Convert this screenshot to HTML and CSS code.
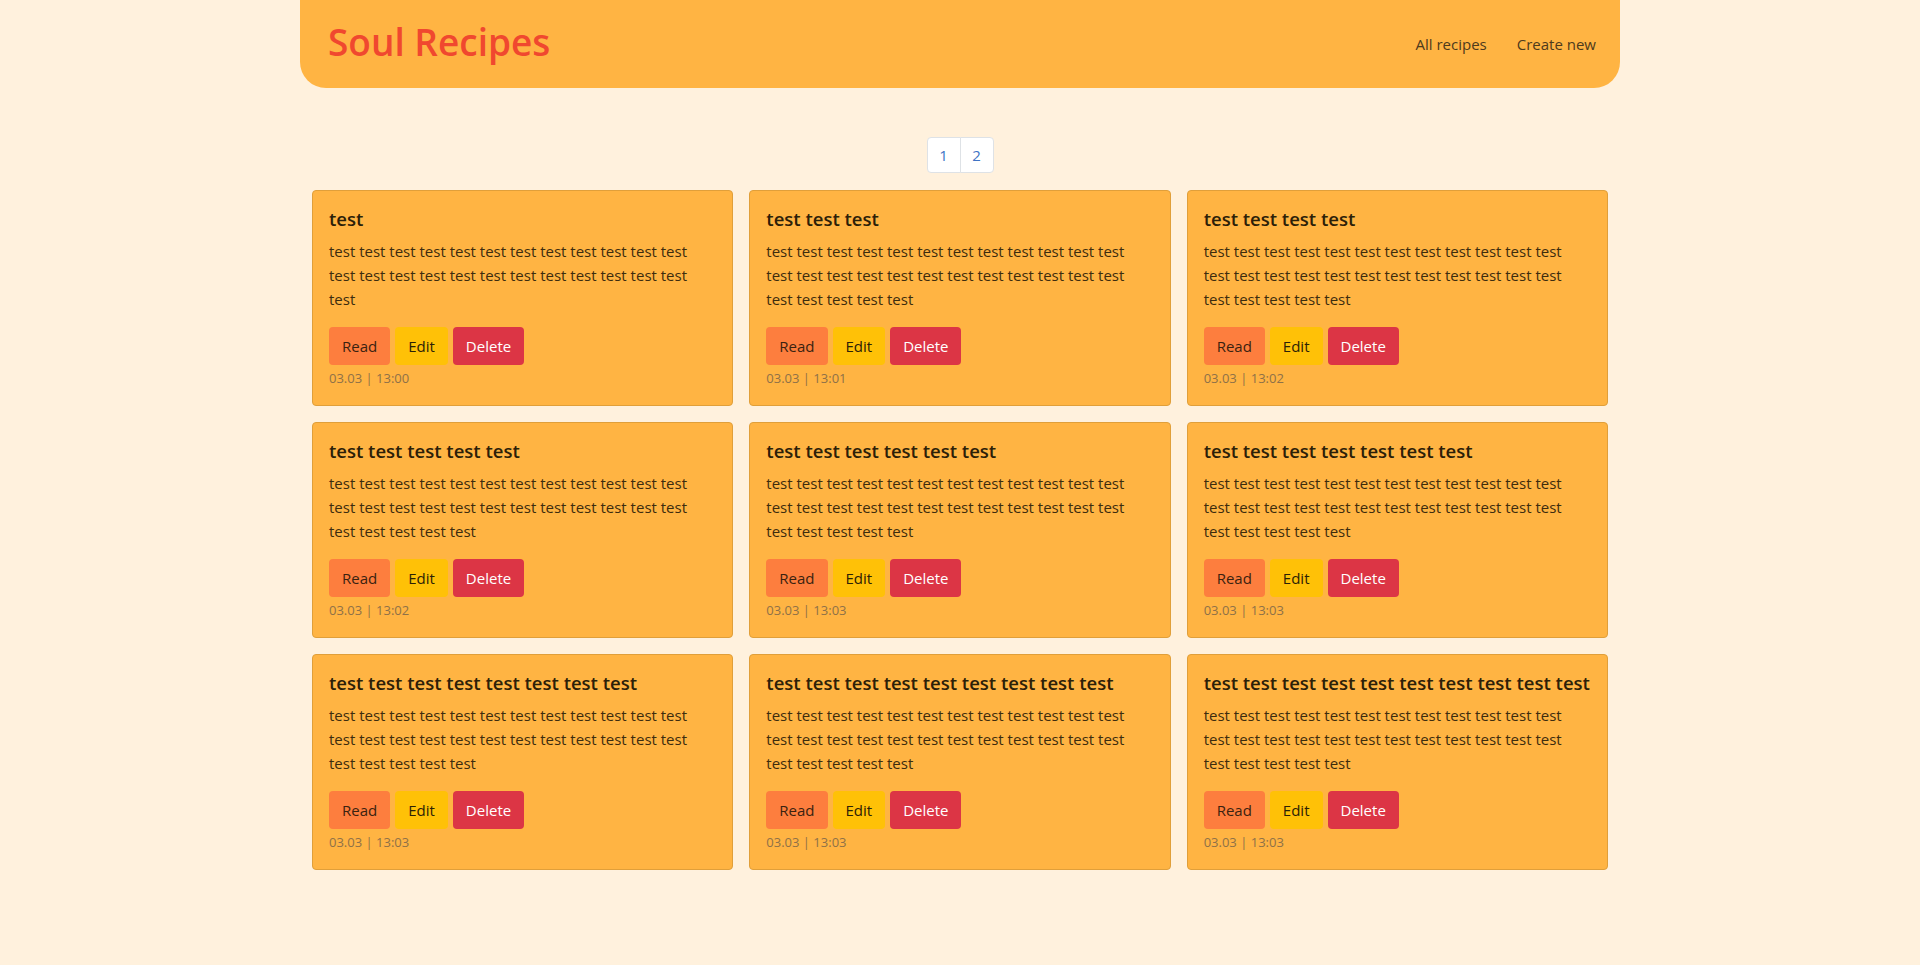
FILE: index.html
```html
<!DOCTYPE html>
<html lang="en">
<head>
<meta charset="utf-8">
<title>Soul Recipes</title>
<link rel="stylesheet" href="styles.css">
</head>
<body>
<div class="page">
  <header class="header">
    <h1 class="brand">Soul Recipes</h1>
    <nav class="nav">
      <a class="nav-link" href="#">All recipes</a>
      <a class="nav-link" href="#">Create new</a>
    </nav>
  </header>
  <main class="main">
    <div class="pagination">
      <a class="page-item" href="#">1</a>
      <a class="page-item" href="#">2</a>
    </div>
    <div class="cards">
      <div class="card">
        <h5 class="card-title">test</h5>
        <p class="card-text">test test test test test test test test test test test test test test test test test test test test test test test test test</p>
        <div class="actions"><a class="btn btn-read" href="#">Read</a><a class="btn btn-edit" href="#">Edit</a><a class="btn btn-delete" href="#">Delete</a></div>
        <div class="date">03.03 | 13:00</div>
      </div>
      <div class="card">
        <h5 class="card-title">test test test</h5>
        <p class="card-text">test test test test test test test test test test test test test test test test test test test test test test test test test test test test test</p>
        <div class="actions"><a class="btn btn-read" href="#">Read</a><a class="btn btn-edit" href="#">Edit</a><a class="btn btn-delete" href="#">Delete</a></div>
        <div class="date">03.03 | 13:01</div>
      </div>
      <div class="card">
        <h5 class="card-title">test test test test</h5>
        <p class="card-text">test test test test test test test test test test test test test test test test test test test test test test test test test test test test test</p>
        <div class="actions"><a class="btn btn-read" href="#">Read</a><a class="btn btn-edit" href="#">Edit</a><a class="btn btn-delete" href="#">Delete</a></div>
        <div class="date">03.03 | 13:02</div>
      </div>
      <div class="card">
        <h5 class="card-title">test test test test test</h5>
        <p class="card-text">test test test test test test test test test test test test test test test test test test test test test test test test test test test test test</p>
        <div class="actions"><a class="btn btn-read" href="#">Read</a><a class="btn btn-edit" href="#">Edit</a><a class="btn btn-delete" href="#">Delete</a></div>
        <div class="date">03.03 | 13:02</div>
      </div>
      <div class="card">
        <h5 class="card-title">test test test test test test</h5>
        <p class="card-text">test test test test test test test test test test test test test test test test test test test test test test test test test test test test test</p>
        <div class="actions"><a class="btn btn-read" href="#">Read</a><a class="btn btn-edit" href="#">Edit</a><a class="btn btn-delete" href="#">Delete</a></div>
        <div class="date">03.03 | 13:03</div>
      </div>
      <div class="card">
        <h5 class="card-title">test test test test test test test</h5>
        <p class="card-text">test test test test test test test test test test test test test test test test test test test test test test test test test test test test test</p>
        <div class="actions"><a class="btn btn-read" href="#">Read</a><a class="btn btn-edit" href="#">Edit</a><a class="btn btn-delete" href="#">Delete</a></div>
        <div class="date">03.03 | 13:03</div>
      </div>
      <div class="card">
        <h5 class="card-title">test test test test test test test test</h5>
        <p class="card-text">test test test test test test test test test test test test test test test test test test test test test test test test test test test test test</p>
        <div class="actions"><a class="btn btn-read" href="#">Read</a><a class="btn btn-edit" href="#">Edit</a><a class="btn btn-delete" href="#">Delete</a></div>
        <div class="date">03.03 | 13:03</div>
      </div>
      <div class="card">
        <h5 class="card-title">test test test test test test test test test</h5>
        <p class="card-text">test test test test test test test test test test test test test test test test test test test test test test test test test test test test test</p>
        <div class="actions"><a class="btn btn-read" href="#">Read</a><a class="btn btn-edit" href="#">Edit</a><a class="btn btn-delete" href="#">Delete</a></div>
        <div class="date">03.03 | 13:03</div>
      </div>
      <div class="card">
        <h5 class="card-title">test test test test test test test test test test</h5>
        <p class="card-text">test test test test test test test test test test test test test test test test test test test test test test test test test test test test test</p>
        <div class="actions"><a class="btn btn-read" href="#">Read</a><a class="btn btn-edit" href="#">Edit</a><a class="btn btn-delete" href="#">Delete</a></div>
        <div class="date">03.03 | 13:03</div>
      </div>
    </div>
  </main>
</div>
</body>
</html>
```

FILE: styles.css
```css
* { box-sizing: border-box; }

html, body {
  margin: 0;
  padding: 0;
  background: #fff1dd;
  font-family: "Open Sans", "Noto Sans", "Liberation Sans", sans-serif;
  color: #3a2a10;
}

.page {
  width: 1320px;
  margin: 0 auto;
}

.header {
  height: 88px;
  background: #ffb443;
  border-radius: 0 0 26px 26px;
  display: flex;
  align-items: center;
  justify-content: space-between;
  padding: 0 24px 0 28px;
}

.brand {
  margin: 0 0 4px 0;
  font-size: 37px;
  font-weight: 600;
  line-height: 1.2;
  color: #f0482f;
}

.nav {
  display: flex;
  gap: 30px;
}

.nav-link {
  font-size: 15px;
  line-height: 24px;
  color: #4e3a1c;
  text-decoration: none;
}

.main {
  padding: 0 12px;
}

.pagination {
  margin-top: 49px;
  display: flex;
  justify-content: center;
}

.page-item {
  width: 34px;
  height: 36px;
  display: flex;
  align-items: center;
  justify-content: center;
  background: #ffffff;
  border: 1px solid #dee2e6;
  color: #3d73c4;
  font-size: 15px;
  text-decoration: none;
}

.page-item:first-child {
  border-radius: 4px 0 0 4px;
}

.page-item + .page-item {
  margin-left: -1px;
  border-radius: 0 4px 4px 0;
}

.cards {
  margin-top: 17px;
  display: grid;
  grid-template-columns: repeat(3, 1fr);
  gap: 16px;
}

.card {
  background: #ffb443;
  border: 1px solid #e09f3a;
  border-radius: 4px;
  padding: 16px;
}

.card-title {
  margin: 0 0 8px 0;
  font-size: 18.5px;
  font-weight: 600;
  line-height: 24px;
  color: #2c2008;
  white-space: nowrap;
}

.card-text {
  margin: 0 0 16px 0;
  font-size: 15px;
  line-height: 24px;
  color: #3d2c0e;
}

.actions {
  display: flex;
  gap: 5px;
}

.btn {
  display: inline-block;
  padding: 6px 12px;
  border: 1px solid transparent;
  border-radius: 4px;
  font-size: 15px;
  line-height: 24px;
  text-decoration: none;
}

.btn-read {
  background: #fd7e3e;
  color: #3a2210;
}

.btn-edit {
  background: #ffc107;
  color: #2c2106;
}

.btn-delete {
  background: #dc3545;
  color: #ffffff;
}

.date {
  margin-top: 3px;
  font-size: 13px;
  line-height: 21px;
  color: #8e7148;
}
```
